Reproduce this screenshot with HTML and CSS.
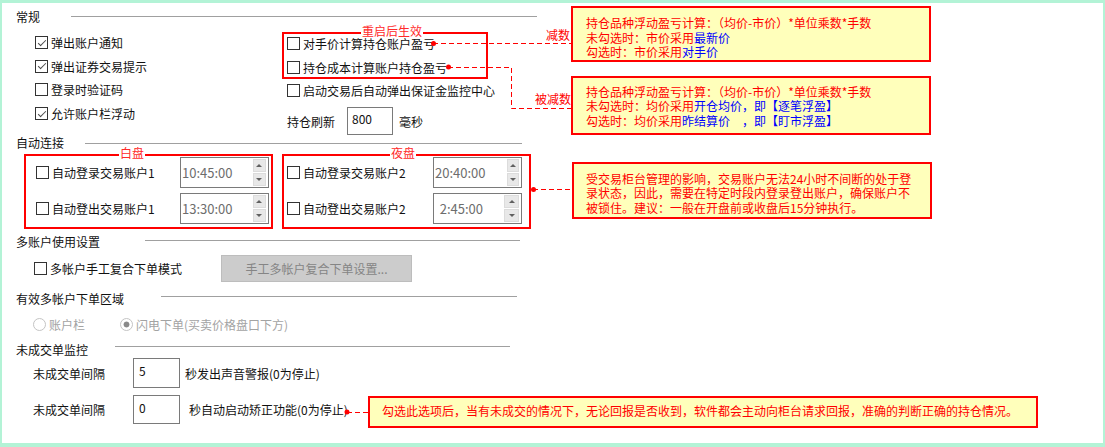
FILE: index.html
```html
<!DOCTYPE html>
<html lang="zh-CN">
<head>
<meta charset="utf-8">
<link rel="stylesheet" href="styles.css">
</head>
<body>

<div class="frame">

  <div class="sec-head h-general"><span class="title">常规</span><span class="rule"></span></div>
  <div class="general">
    <div class="col-left">
      <label class="row"><span class="cb on"></span>弹出账户通知</label>
      <label class="row"><span class="cb on"></span>弹出证券交易提示</label>
      <label class="row"><span class="cb"></span>登录时验证码</label>
      <label class="row"><span class="cb on"></span>允许账户栏浮动</label>
    </div>
    <div class="col-right">
      <fieldset class="redbox restart">
        <legend>重启后生效</legend>
        <label class="row"><span class="cb"></span>对手价计算持仓账户盈亏</label>
        <label class="row"><span class="cb"></span>持仓成本计算账户持仓盈亏</label>
      </fieldset>
      <label class="row monitor"><span class="cb"></span>启动交易后自动弹出保证金监控中心</label>
      <div class="refresh">
        <span>持仓刷新</span>
        <span class="field w46">800</span>
        <span>毫秒</span>
      </div>
    </div>
  </div>

  <div class="sec-head h-auto"><span class="title">自动连接</span><span class="rule"></span></div>
  <div class="auto-groups">
    <fieldset class="redbox time day">
      <legend>白盘</legend>
      <div class="trow">
        <label class="row"><span class="cb"></span>自动登录交易账户1</label>
        <div class="spin"><span class="val">10:45:00</span><span class="arrows"><b class="up"></b><b class="dn"></b></span></div>
      </div>
      <div class="trow">
        <label class="row"><span class="cb"></span>自动登出交易账户1</label>
        <div class="spin"><span class="val">13:30:00</span><span class="arrows"><b class="up"></b><b class="dn"></b></span></div>
      </div>
    </fieldset>
    <fieldset class="redbox time night">
      <legend>夜盘</legend>
      <div class="trow">
        <label class="row"><span class="cb"></span>自动登录交易账户2</label>
        <div class="spin"><span class="val">20:40:00</span><span class="arrows"><b class="up"></b><b class="dn"></b></span></div>
      </div>
      <div class="trow">
        <label class="row"><span class="cb"></span>自动登出交易账户2</label>
        <div class="spin"><span class="val">2:45:00</span><span class="arrows"><b class="up"></b><b class="dn"></b></span></div>
      </div>
    </fieldset>
  </div>

  <div class="sec-head h-multi"><span class="title">多账户使用设置</span><span class="rule"></span></div>
  <div class="multi">
    <label class="row"><span class="cb"></span>多帐户手工复合下单模式</label>
    <div class="btn">手工多帐户复合下单设置...</div>
  </div>

  <div class="sec-head h-area"><span class="title">有效多帐户下单区域</span><span class="rule"></span></div>
  <div class="radios">
    <label class="row"><span class="rd"></span>账户栏</label>
    <label class="row"><span class="rd on"></span>闪电下单(买卖价格盘口下方)</label>
  </div>

  <div class="sec-head h-watch"><span class="title">未成交单监控</span><span class="rule"></span></div>
  <div class="watch-row first">
    <span class="lbl">未成交单间隔</span>
    <span class="field w47">5</span>
    <span class="after">秒发出声音警报(0为停止)</span>
  </div>
  <div class="watch-row second">
    <span class="lbl">未成交单间隔</span>
    <span class="field w47">0</span>
    <span class="after">秒自动启动矫正功能(0为停止)</span>
  </div>

</div>

<!-- annotations -->
<svg class="wires" width="1105" height="447" viewBox="0 0 1105 447">
  <g fill="none" stroke="#f00" stroke-width="1" stroke-dasharray="5 3">
    <path d="M433 43.5 H571"/>
    <path d="M448 67.5 H511.5 V108.5 H571"/>
    <path d="M533 189.5 H572"/>
    <path d="M347 412.5 H368"/>
  </g>
  <g fill="#f00">
    <circle cx="433.5" cy="43.5" r="2.5"/>
    <circle cx="448.5" cy="67" r="2.5"/>
    <circle cx="533.5" cy="189.5" r="2.5"/>
    <circle cx="347" cy="412" r="2.5"/>
  </g>
</svg>

<span class="tag t1">减数</span>
<span class="tag t2">被减数</span>

<div class="note n1">
  持仓品种浮动盈亏计算：（均价-市价）*单位乘数*手数<br>
  未勾选时：市价采用<span class="blue">最新价</span><br>
  勾选时：市价采用<span class="blue">对手价</span>
</div>

<div class="note n2">
  持仓品种浮动盈亏计算：（均价-市价）*单位乘数*手数<br>
  未勾选时：均价采用<span class="blue">开仓均价，即【逐笔浮盈】</span><br>
  勾选时：均价采用<span class="blue">昨结算价　，即【盯市浮盈】</span>
</div>

<div class="note n3">
  受交易柜台管理的影响，交易账户无法24小时不间断的处于登<br>
  录状态，因此，需要在特定时段内登录登出账户，确保账户不<br>
  被锁住。建议：一般在开盘前或收盘后15分钟执行。
</div>

<div class="note n4">
  勾选此选项后，当有未成交的情况下，无论回报是否收到，软件都会主动向柜台请求回报，准确的判断正确的持仓情况。
</div>

</body>
</html>
```

FILE: styles.css
```css
html, body {
    margin: 0;
}
body {
    font-family: "Noto Sans CJK SC", "Liberation Sans", sans-serif;
    font-size: 12px;
    color: #111111;
    overflow: hidden;
}
.frame {
    box-sizing: border-box;
    height: 447px;
    border-style: solid;
    border-color: #b3f3d6;
    border-width: 3px 2px 4px 2px;
    background-color: #FFFFFF;
    padding: 6px 0 0 14px;
}

/* section headings with the grey rule */
.sec-head {
    display: flex;
    align-items: center;
    height: 16px;
    line-height: 16px;
}
.sec-head .title {
    flex: none;
    white-space: nowrap;
}
.sec-head .rule {
    flex: 1;
    height: 1px;
    background-color: #a0a0a0;
}
.h-general { width: 521px; }
.h-general .title { width: 55px; }
.h-general .rule { margin-top: -2px; }
.h-auto { width: 506px; }
.h-auto .title { width: 69px; }
.h-multi { width: 504px; margin-top: 5px; }
.h-multi .title { width: 129px; }
.h-multi .rule { margin-top: -3px; }
.h-area { width: 501px; margin-top: 9px; }
.h-area .title { width: 145px; }
.h-area .rule { margin-top: -6px; }
.h-watch { width: 494px; margin-top: 10px; }
.h-watch .title { width: 99px; }
.h-watch .rule { margin-top: -7px; }

/* checkbox rows */
.row {
    display: flex;
    align-items: center;
    gap: 3px;
    white-space: nowrap;
}
.cb {
    flex: none;
    position: relative;
    box-sizing: border-box;
    width: 13px;
    height: 13px;
    border: 1px solid #333333;
    background-color: #FFFFFF;
}
.cb.on::after {
    content: "";
    position: absolute;
    left: 3.5px;
    top: 0.5px;
    width: 3px;
    height: 7px;
    border: solid #4a4a4a;
    border-width: 0 1.4px 1.4px 0;
    transform: rotate(45deg);
}

.general {
    display: flex;
    margin-top: 6px;
}
.col-left {
    margin-left: 19px;
    width: 247px;
}
.col-left .row {
    height: 23.6px;
}
.col-right {
    margin-top: 1px;
}

/* red annotation boxes */
.redbox {
    margin: 0;
    min-width: 0;
    min-inline-size: 0;
    box-sizing: border-box;
    border: 2px solid #ff0000;
}
.redbox legend {
    position: relative;
    top: -2px;
    line-height: 2px;
    padding: 0 1px;
    color: #ff2a2a;
    font-size: 12px;
}
.restart {
    width: 206px;
    padding: 0 0 1px 3px;
}
.restart legend { margin-left: 74px; }
.restart .row { height: 18px; }
.restart .row + .row { margin-top: 6px; }

.monitor {
    height: 18px;
    margin: 2px 0 0 5px;
}
.refresh {
    display: flex;
    align-items: center;
    height: 28px;
    margin: 8px 0 0 5px;
}

.field {
    box-sizing: border-box;
    height: 100%;
    border: 1px solid #7a7a7a;
    padding: 3px 4px 0 4px;
    line-height: 16px;
    font-size: 12px;
    background-color: #FFFFFF;
}
.w46 {
    width: 46px;
    margin: 0 6px 0 12px;
}
.w47 {
    width: 47px;
}

/* auto connect */
.auto-groups {
    display: flex;
    gap: 9px;
    margin: 3px 0 0 8px;
}
.time {
    width: 249px;
    height: 75px;
}
.day {
    padding: 1px 2px 3px 10px;
}
.day legend { margin-left: 83px; }
.night {
    padding: 1px 7px 3px 3px;
}
.night legend { margin-left: 103px; }
.trow {
    display: flex;
    justify-content: space-between;
    align-items: center;
    height: 31px;
}
.trow + .trow { margin-top: 5px; }

.spin {
    box-sizing: border-box;
    width: 89px;
    height: 31px;
    display: flex;
    border: 1px solid #7a7a7a;
    padding: 1px 2px 1px 1px;
}
.spin .val {
    flex: 1;
    align-self: center;
    text-align: right;
    padding-right: 20px;
    color: #6d6d6d;
    font-size: 13px;
}
.night .spin .val { padding-right: 21px; }
.arrows {
    width: 15px;
    display: flex;
    flex-direction: column;
    gap: 1px;
}
.arrows b {
    flex: 1;
    position: relative;
    background-color: #e8e8e8;
    border: 1px solid #dcdcdc;
}
.arrows b::after {
    content: "";
    position: absolute;
    left: 50%;
    top: 50%;
    margin: -2px 0 0 -3px;
    border-left: 3px solid transparent;
    border-right: 3px solid transparent;
}
.arrows .up::after { border-bottom: 3px solid #606060; }
.arrows .dn::after { border-top: 3px solid #606060; }

/* multi account */
.multi {
    display: flex;
    align-items: center;
    height: 27px;
    margin: 5px 0 0 18px;
}
.multi .row { width: 187px; }
.btn {
    box-sizing: border-box;
    width: 191px;
    height: 27px;
    display: flex;
    align-items: center;
    justify-content: center;
    border: 1px solid #bdbdbd;
    background-color: #cccccc;
    color: #858585;
}

.radios {
    display: flex;
    align-items: center;
    height: 16px;
    margin: 9px 0 0 17px;
    color: #a3a3a3;
}
.radios .row:first-child { width: 87px; }
.rd {
    flex: none;
    box-sizing: border-box;
    width: 13px;
    height: 13px;
    border-radius: 50%;
    border: 1px solid #c4c4c4;
    background-color: #FFFFFF;
}
.rd.on {
    background: radial-gradient(circle, #8a8a8a 0, #8a8a8a 2.6px, #FFFFFF 3.3px);
}

/* unfilled order monitor */
.watch-row {
    display: flex;
    align-items: center;
    margin-left: 17px;
}
.watch-row .lbl { width: 100px; }
.watch-row.first { height: 30px; }
.watch-row.second { height: 29px; margin-top: 7px; }
.watch-row .field { padding-top: 4px; padding-left: 5px; }
.first .after { margin-left: 5px; }
.second .after { margin-left: 9px; }

/* callouts */
.wires {
    position: absolute;
    left: 0;
    top: 0;
}
.tag {
    position: absolute;
    color: #ff0000;
    line-height: 16px;
}
.t1 { left: 546px; top: 27px; }
.t2 { left: 535px; top: 91px; }

.note {
    position: absolute;
    box-sizing: border-box;
    border: 2px solid #ff0000;
    background-color: #ffffbb;
    color: #ff0000;
    line-height: 14.5px;
    padding-left: 13px;
    white-space: nowrap;
}
.blue { color: #0000ff; }
.n1 { left: 571px; top: 6px; width: 360px; height: 56px; padding-top: 8px; }
.n2 { left: 571px; top: 76px; width: 360px; height: 59px; padding-top: 6.5px; }
.n3 { left: 572px; top: 162px; width: 360px; height: 57px; padding-top: 7.5px; padding-left: 12px; }
.n4 { left: 368px; top: 396px; width: 670px; height: 32px; padding-top: 5.5px; padding-left: 12px; }
```
